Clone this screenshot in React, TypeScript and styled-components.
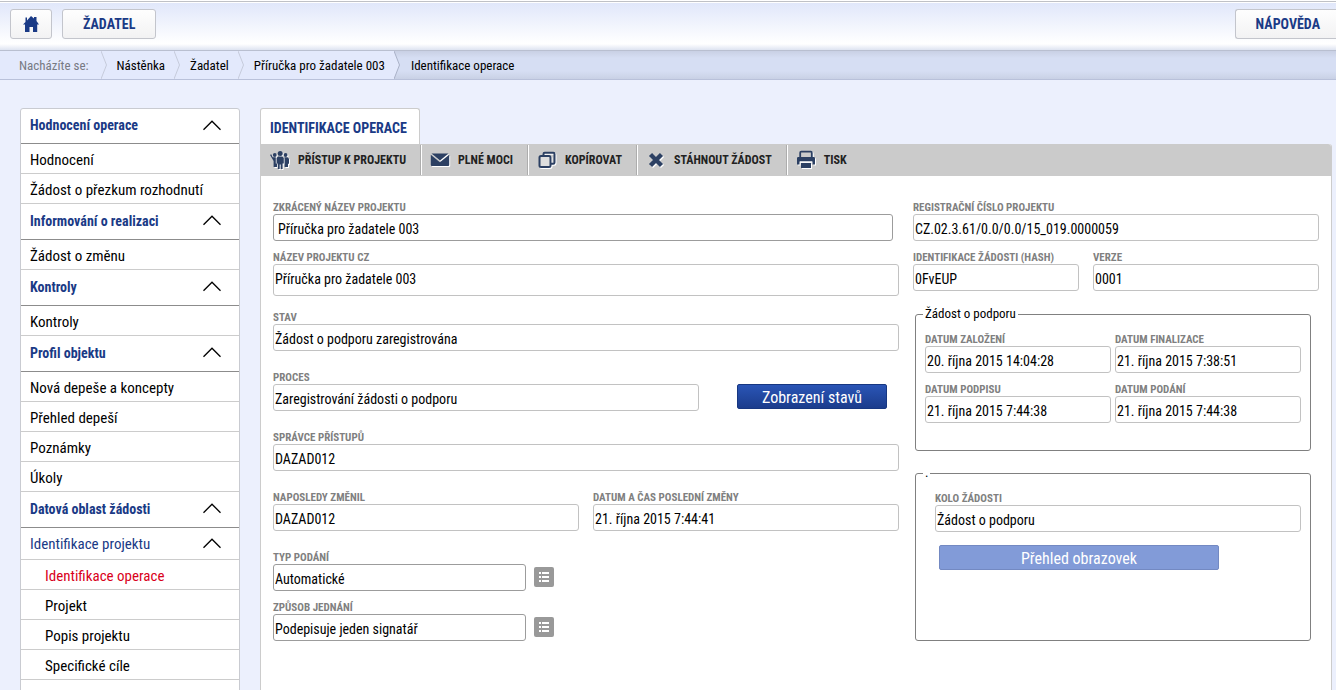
import React, { useId } from "react";
import styled, { createGlobalStyle, css } from "styled-components";

const navy = "#1a3a86";
const iconBlue = "#2c4063";

const GlobalStyle = createGlobalStyle`
  * { box-sizing: border-box; }
  body {
    margin: 0;
    background: #ecf0fd;
    color: #000;
    font-family: "Roboto Condensed", Roboto, "Liberation Sans", sans-serif;
    font-size: 14px;
  }
  button, input { font-family: inherit; }
  a { color: inherit; text-decoration: none; }
`;

const Page = styled.div`
  height: 100vh;
  overflow: hidden;
`;

const TopBar = styled.header`
  display: flex;
  align-items: flex-start;
  gap: 10px;
  height: 50px;
  padding: 8px 0 0 10px;
  border-top: 1px solid #fff;
  box-shadow: inset 0 1px 0 #bfc1c6, inset 0 2px 0 #fff;
  background: linear-gradient(#dfe6fa 0, #fff 42px, #fff 43px, #d9dfef 50px);
`;

const NavButton = styled.button<{ $wide?: boolean; $edge?: boolean }>`
  display: flex;
  align-items: center;
  justify-content: center;
  height: 30px;
  padding: 0 ${(p) => (p.$edge ? "16px 0 20px" : p.$wide ? "20px" : "12px")};
  margin-left: ${(p) => (p.$edge ? "auto" : "0")};
  border: 1px solid #c3c5cc;
  border-right-width: ${(p) => (p.$edge ? "0" : "1px")};
  border-radius: ${(p) => (p.$edge ? "3px 0 0 3px" : "3px")};
  background: linear-gradient(#fefefe, #f2f2f3);
  color: ${navy};
  font-size: 14px;
  font-weight: 700;
`;

const Crumbs = styled.nav`
  display: flex;
  height: 30px;
  border-top: 1px solid #b9bfd0;
  border-bottom: 1px solid #b9c1da;
  background: linear-gradient(#c9d0e4 0, #d6def3 7px, #d6def3 20px, #c9d1e5 28px);
  font-size: 13px;
  line-height: 30px;
`;

const Trail = styled.span`
  display: flex;
  padding-left: 10px;
  background: #e3e9fc;
  &:first-child { padding-left: 19px; }
`;

const TrailHint = styled.span`
  padding-right: 12px;
  color: #777a83;
`;

const TrailLink = styled.a`
  padding-right: 9px;
`;

const CurrentCrumb = styled.span`
  padding-left: 11px;
`;

const Columns = styled.div`
  display: flex;
  align-items: flex-start;
  gap: 20px;
  padding: 28px 4px 0 20px;
`;

const Sidebar = styled.nav`
  flex: 0 0 220px;
  border: 1px solid #c9cbd1;
  border-radius: 3px 3px 0 0;
  background: #fff;
`;

const rowText = css`
  display: flex;
  align-items: center;
  width: 100%;
  border: 0;
  border-bottom: 1px solid #ccc;
  background: none;
  text-align: left;
`;

const GroupButton = styled.button<{ $sub?: boolean }>`
  ${rowText}
  justify-content: space-between;
  height: ${(p) => (p.$sub ? "32px" : "36px")};
  padding: 0 18px ${(p) => (p.$sub ? "0" : "2px")} 9px;
  border-bottom-color: ${(p) => (p.$sub ? "#ccc" : "#8c8c8c")};
  color: ${navy};
  font-size: ${(p) => (p.$sub ? "15px" : "14px")};
  font-weight: ${(p) => (p.$sub ? 400 : 700)};
  &:first-child { height: 35px; }
`;

const SideLink = styled.a<{ $indent?: boolean; $active?: boolean }>`
  ${rowText}
  height: 30px;
  padding: 2px 0 0 ${(p) => (p.$indent ? "24px" : "9px")};
  color: ${(p) => (p.$active ? "#d9001b" : "#000")};
  font-size: 15px;
`;

const Main = styled.main`
  flex: 1;
  min-width: 0;
`;

const Tab = styled.button`
  display: block;
  height: 36px;
  padding: 3px 12px 0 9px;
  border: 1px solid #ccc;
  border-bottom: 0;
  border-radius: 3px 3px 0 0;
  background: #fff;
  color: ${navy};
  font-size: 14px;
  font-weight: 700;
`;

const Panel = styled.section`
  min-height: 600px;
  border: solid #ccc;
  border-width: 0 1px;
  border-radius: 0 3px 0 0;
  background: #fff;
`;

const Toolbar = styled.div`
  display: flex;
  height: 32px;
  border-radius: 0 3px 0 0;
  background: #cbcbcb;
`;

const ToolButton = styled.button`
  display: flex;
  align-items: center;
  gap: 8px;
  height: 30px;
  margin-top: 1px;
  padding: 0 14px 0 9px;
  border: 0;
  border-right: 1px solid #adadad;
  box-shadow: inset 1px 0 0 #fff;
  background: none;
  color: #222;
  font-size: 12px;
  font-weight: 700;
  svg { filter: drop-shadow(1px 1px 0 #fff); }
  &:first-child { box-shadow: none; }
  &:last-child { border: 0; }
`;

const FormGrid = styled.form`
  display: grid;
  grid-template-columns: 626fr 406fr;
  gap: 14px;
  padding: 24px 12px 0;
`;

const Stack = styled.div<{ $gap: number }>`
  display: flex;
  flex-direction: column;
  gap: ${(p) => p.$gap}px;
`;

const Row = styled.div<{ $columns: string; $gap: number }>`
  display: grid;
  grid-template-columns: ${(p) => p.$columns};
  align-items: end;
  gap: ${(p) => p.$gap}px;
`;

const FieldBox = styled.div<{ $short?: boolean }>`
  display: flex;
  flex-direction: column;
  min-width: 0;
  margin-right: ${(p) => (p.$short ? "6px" : "0")};
`;

const FieldLabel = styled.label`
  height: 14px;
  color: #808080;
  font-size: 11px;
  font-weight: 700;
  line-height: 16px;
  white-space: nowrap;
`;

const TextBox = styled.input<{ $strong?: boolean; $tall?: boolean; $inset?: boolean }>`
  width: 100%;
  min-width: 0;
  height: ${(p) => (p.$tall ? "32px" : "27px")};
  padding: 2px 2px ${(p) => (p.$tall ? "4px" : "0")} ${(p) => (p.$inset ? "4px" : "1px")};
  border: 1px solid ${(p) => (p.$strong ? "#9c9c9c" : "#c2c2c2")};
  border-radius: 3px;
  background: #fff;
  color: #000;
  font-size: 14px;
`;

const PrimaryButton = styled.button`
  height: 25px;
  margin: 0 12px 2px 24px;
  padding: 2px 0 0;
  border: 1px solid #173781;
  border-radius: 2px;
  background: linear-gradient(#2a55b6, #1b3c8c);
  color: #fff;
  font-size: 16px;
  line-height: 20px;
`;

const SoftButton = styled(PrimaryButton)`
  width: 280px;
  max-width: 100%;
  margin: 0 0 0 4px;
  border-color: #7389c2;
  background: #829bd8;
`;

const ListButton = styled.button`
  display: flex;
  width: 20px;
  height: 20px;
  margin-bottom: 4px;
  padding: 0;
  border: 0;
  border-radius: 2px;
  background: #999;
`;

const GroupSet = styled.fieldset<{ $height: number; $inner?: number }>`
  min-width: 0;
  min-height: ${(p) => p.$height}px;
  margin: 0 8px 0 2px;
  padding: 10px 9px 0 ${(p) => p.$inner || 9}px;
  border: 1px solid #808080;
  border-radius: 3px;
`;

const GroupLegend = styled.legend<{ $shift: number }>`
  height: 16px;
  margin-left: -${(p) => p.$shift}px;
  padding: 0 2px;
  font-size: 13px;
  line-height: 16px;
`;

const HomeIcon = () => (
  <svg width="16" height="16" viewBox="0 0 16 16" fill={navy} aria-hidden="true">
    <path d="M8 0 11 2.600V1h2.500v4L16 8.500h-1.800V16H10v-5H6.500v5H2V8.500H0L2.500 6V1.500h1.500v3z" />
  </svg>
);

const Chevron = () => (
  <svg width="18" height="11" viewBox="0 0 18 11" fill="none" stroke="#000" strokeWidth="1.300" aria-hidden="true">
    <path d="M.5 9.700 9 1.200l8.500 8.500" />
  </svg>
);

const DividerShape = styled.svg<{ $strong?: boolean }>`
  flex: none;
  background: ${(p) => (p.$strong ? "none" : "#e3e9fc")};
`;

const Divider = ({ strong }: { strong?: boolean }) => (
  <DividerShape $strong={strong} width="6" height="28" viewBox="0 0 6 28" aria-hidden="true">
    <path d="M0 0 5.500 14 0 28" fill="#e3e9fc" stroke={strong ? "#aab2c8" : "#c6cbdb"} />
  </DividerShape>
);

const PeopleIcon = () => (
  <svg width="20" height="20" viewBox="0 0 20 20" fill={iconBlue} aria-hidden="true">
    <circle cx="10.200" cy="3.400" r="2.500" />
    <circle cx="4.800" cy="5" r="1.900" />
    <circle cx="15.600" cy="5" r="1.900" />
    <path d="M8 6.600h4.400l1.400 1.400v5.400h-1.200V19h-1.900v-4.500h-1V19H7.800v-5.600H6.600V8z" />
    <path d="M1 4 2.800 7.300h3v6.200H7V17H3.600v-6L.2 5.200zM14.600 7.300h3L19 8.700v5h-1V17h-3.400z" />
  </svg>
);

const MailIcon = () => (
  <svg width="20" height="20" viewBox="0 0 20 20" fill={iconBlue} aria-hidden="true">
    <path d="M1.500 3.500h17L10 10.500z" />
    <path d="M.8 4.800 10 12.300l9.200-7.500V15a1 1 0 0 1-1 1H1.800a1 1 0 0 1-1-1z" />
  </svg>
);

const CopyIcon = () => (
  <svg width="20" height="20" viewBox="0 0 20 20" fill="none" stroke={iconBlue} strokeWidth="2" aria-hidden="true">
    <rect x="2.500" y="6" width="11" height="11" rx="1.500" fill="#dedede" />
    <path d="M6.500 5.500V4a1.200 1.200 0 0 1 1.200-1.200h8.600A1.200 1.200 0 0 1 17.500 4v8.500a1.200 1.200 0 0 1-1.200 1.200H14" />
  </svg>
);

const CrossIcon = () => (
  <svg width="20" height="20" viewBox="0 0 20 20" fill="none" stroke={iconBlue} strokeWidth="4.400" aria-hidden="true">
    <path d="m4.500 4.500 11 11m0-11-11 11" />
  </svg>
);

const PrintIcon = () => (
  <svg width="20" height="20" viewBox="0 0 20 20" aria-hidden="true">
    <path d="M4.200 7V2.700q0-1 1-1h9.600q1 0 1 1V7" fill="#cbcbcb" stroke={iconBlue} strokeWidth="1.800" />
    <path d="M2.300 7h15.400q1.300 0 1.300 1.300v6.200h-2.500v-3h-13v3H1V8.300Q1 7 2.300 7z" fill={iconBlue} />
    <path d="M5 13h10v5H5z" fill={iconBlue} />
    <path d="M4 12h12" stroke="#fff" />
  </svg>
);

const ListIcon = () => (
  <svg width="20" height="20" viewBox="0 0 20 20" fill="#fff" aria-hidden="true">
    <path d="M5 5h2v2H5zm3 0h7v2H8zM5 9h2v2H5zm3 0h7v2H8zM5 13h2v2H5zm3 0h7v2H8z" />
  </svg>
);

interface FieldProps {
  label: string;
  value: string;
  strong?: boolean;
  tall?: boolean;
  short?: boolean;
  editable?: boolean;
}

function Field({ label, value, strong, tall, short, editable }: FieldProps) {
  const id = useId();
  return (
    <FieldBox $short={short}>
      <FieldLabel htmlFor={id}>{label}</FieldLabel>
      <TextBox
        id={id}
        type="text"
        defaultValue={value}
        readOnly={!editable}
        $strong={strong}
        $tall={tall}
        $inset={short}
      />
    </FieldBox>
  );
}

const groups = [
  { title: "Hodnocení operace", items: ["Hodnocení", "Žádost o přezkum rozhodnutí"] },
  { title: "Informování o realizaci", items: ["Žádost o změnu"] },
  { title: "Kontroly", items: ["Kontroly"] },
  { title: "Profil objektu", items: ["Nová depeše a koncepty", "Přehled depeší", "Poznámky", "Úkoly"] },
  { title: "Datová oblast žádosti", items: [] },
];

const projectItems = ["Identifikace operace", "Projekt", "Popis projektu", "Specifické cíle", "Indikátory"];

const tools = [
  { text: "PŘÍSTUP K PROJEKTU", Icon: PeopleIcon },
  { text: "PLNÉ MOCI", Icon: MailIcon },
  { text: "KOPÍROVAT", Icon: CopyIcon },
  { text: "STÁHNOUT ŽÁDOST", Icon: CrossIcon },
  { text: "TISK", Icon: PrintIcon },
];

const trail = ["Nástěnka", "Žadatel", "Příručka pro žadatele 003"];

export default function App() {
  return (
    <Page>
      <GlobalStyle />
      <TopBar>
        <NavButton type="button" aria-label="Domů">
          <HomeIcon />
        </NavButton>
        <NavButton type="button" $wide>ŽADATEL</NavButton>
        <NavButton type="button" $edge>NÁPOVĚDA</NavButton>
      </TopBar>
      <Crumbs>
        <Trail>
          <TrailHint>Nacházíte se:</TrailHint>
          <Divider />
        </Trail>
        {trail.map((name, i) => (
          <React.Fragment key={name}>
            <Trail>
              <TrailLink href="#">{name}</TrailLink>
            </Trail>
            <Divider strong={i === trail.length - 1} />
          </React.Fragment>
        ))}
        <CurrentCrumb>Identifikace operace</CurrentCrumb>
      </Crumbs>
      <Columns>
        <Sidebar>
          {groups.map((group) => (
            <React.Fragment key={group.title}>
              <GroupButton type="button">
                {group.title}
                <Chevron />
              </GroupButton>
              {group.items.map((item) => (
                <SideLink key={item} href="#">{item}</SideLink>
              ))}
            </React.Fragment>
          ))}
          <GroupButton type="button" $sub>
            Identifikace projektu
            <Chevron />
          </GroupButton>
          {projectItems.map((item, i) => (
            <SideLink key={item} href="#" $indent $active={i === 0}>{item}</SideLink>
          ))}
        </Sidebar>
        <Main>
          <Tab type="button">IDENTIFIKACE OPERACE</Tab>
          <Panel>
            <Toolbar>
              {tools.map(({ text, Icon }) => (
                <ToolButton key={text} type="button">
                  <Icon />
                  {text}
                </ToolButton>
              ))}
            </Toolbar>
            <FormGrid>
              <Stack $gap={19}>
                <Stack $gap={14}>
                  <Stack $gap={9}>
                    <Field label="ZKRÁCENÝ NÁZEV PROJEKTU" value="Příručka pro žadatele 003" strong short editable />
                    <Field label="NÁZEV PROJEKTU CZ" value="Příručka pro žadatele 003" tall />
                  </Stack>
                  <Field label="STAV" value="Žádost o podporu zaregistrována" />
                </Stack>
                <Row $columns="426fr 186fr" $gap={14}>
                  <Field label="PROCES" value="Zaregistrování žádosti o podporu" />
                  <PrimaryButton type="button">Zobrazení stavů</PrimaryButton>
                </Row>
                <Field label="SPRÁVCE PŘÍSTUPŮ" value="DAZAD012" />
                <Row $columns="1fr 1fr" $gap={14}>
                  <Field label="NAPOSLEDY ZMĚNIL" value="DAZAD012" />
                  <Field label="DATUM A ČAS POSLEDNÍ ZMĚNY" value="21. října 2015 7:44:41" />
                </Row>
                <Stack $gap={9}>
                  <Row $columns="253fr 365fr" $gap={8}>
                    <Field label="TYP PODÁNÍ" value="Automatické" strong editable />
                    <ListButton type="button" aria-label="Vybrat typ podání"><ListIcon /></ListButton>
                  </Row>
                  <Row $columns="253fr 365fr" $gap={8}>
                    <Field label="ZPŮSOB JEDNÁNÍ" value="Podepisuje jeden signatář" strong editable />
                    <ListButton type="button" aria-label="Vybrat způsob jednání"><ListIcon /></ListButton>
                  </Row>
                </Stack>
              </Stack>
              <Stack $gap={15}>
                <Stack $gap={9}>
                  <Field label="REGISTRAČNÍ ČÍSLO PROJEKTU" value="CZ.02.3.61/0.0/0.0/15_019.0000059" />
                  <Row $columns="166fr 226fr" $gap={14}>
                    <Field label="IDENTIFIKACE ŽÁDOSTI (HASH)" value="0FvEUP" />
                    <Field label="VERZE" value="0001" />
                  </Row>
                </Stack>
                <Stack $gap={14}>
                  <GroupSet $height={145}>
                    <GroupLegend $shift={2}>Žádost o podporu</GroupLegend>
                    <Stack $gap={9}>
                      <Row $columns="1fr 1fr" $gap={4}>
                        <Field label="DATUM ZALOŽENÍ" value="20. října 2015 14:04:28" />
                        <Field label="DATUM FINALIZACE" value="21. října 2015 7:38:51" />
                      </Row>
                      <Row $columns="1fr 1fr" $gap={4}>
                        <Field label="DATUM PODPISU" value="21. října 2015 7:44:38" />
                        <Field label="DATUM PODÁNÍ" value="21. října 2015 7:44:38" />
                      </Row>
                    </Stack>
                  </GroupSet>
                  <GroupSet $height={176} $inner={19}>
                    <GroupLegend $shift={12}>.</GroupLegend>
                    <Stack $gap={13}>
                      <Field label="KOLO ŽÁDOSTI" value="Žádost o podporu" />
                      <SoftButton type="button">Přehled obrazovek</SoftButton>
                    </Stack>
                  </GroupSet>
                </Stack>
              </Stack>
            </FormGrid>
          </Panel>
        </Main>
      </Columns>
    </Page>
  );
}
